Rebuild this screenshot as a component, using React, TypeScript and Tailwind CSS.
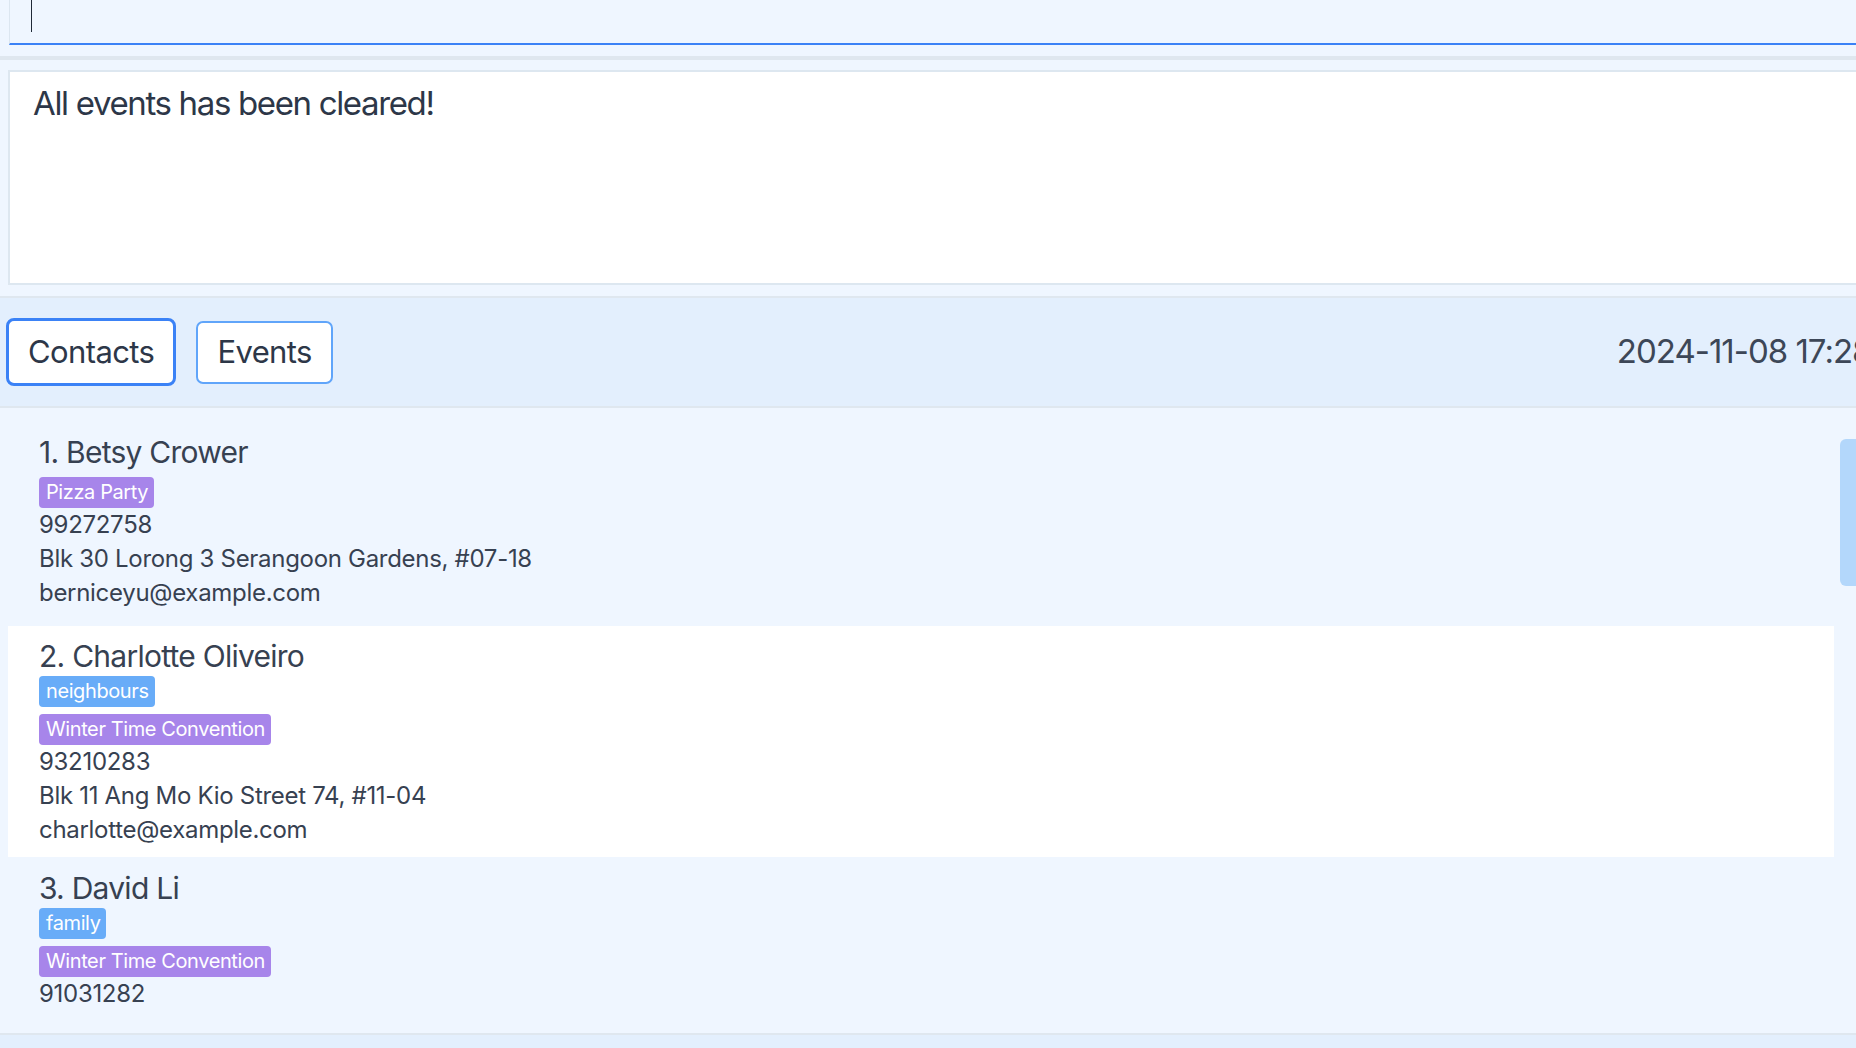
type Tag = { label: string; kind: 'tag' | 'event' };

type Contact = {
    name: string;
    tags: Tag[];
    lines: string[];
};

const contacts: Contact[] = [
    {
        name: 'Betsy Crower',
        tags: [{ label: 'Pizza Party', kind: 'event' }],
        lines: ['99272758', 'Blk 30 Lorong 3 Serangoon Gardens, #07-18', 'berniceyu@example.com'],
    },
    {
        name: 'Charlotte Oliveiro',
        tags: [
            { label: 'neighbours', kind: 'tag' },
            { label: 'Winter Time Convention', kind: 'event' },
        ],
        lines: ['93210283', 'Blk 11 Ang Mo Kio Street 74, #11-04', 'charlotte@example.com'],
    },
    {
        // only the phone line is in view, the rest is scrolled below the list
        name: 'David Li',
        tags: [
            { label: 'family', kind: 'tag' },
            { label: 'Winter Time Convention', kind: 'event' },
        ],
        lines: ['91031282'],
    },
];

function ContactCard({ contact, index }: { contact: Contact; index: number }) {
    const first = index === 0;
    return (
        <div
            className={
                (index % 2 === 1 ? 'bg-white ' : '') +
                (first ? 'pt-[12px] pb-[16px] ' : index === 2 ? 'pt-[13px] pb-[10px] ' : 'pt-[12px] pb-[10px] ') +
                'pl-[31px] text-[#374151]'
            }
        >
            <div className="text-[30px] leading-[36px] tracking-[-0.75px]">
                {index + 1}. {contact.name}
            </div>
            <div className={'flex flex-col items-start gap-[7px] ' + (first ? 'mt-[7px]' : 'mt-[2px]')}>
                {contact.tags.map((t) => (
                    <span
                        key={t.label}
                        className={
                            (t.kind === 'event' ? 'bg-[#a785ea] ' : 'bg-[#68acf8] ') +
                            'h-[31px] rounded-[4px] pl-[7px] pr-[6px] text-[20px] leading-[31px] tracking-[-0.4px] text-white'
                        }
                    >
                        {t.label}
                    </span>
                ))}
            </div>
            <div className="text-[24px] leading-[34px] tracking-[-0.3px]">
                {contact.lines.map((l) => (
                    <div key={l}>{l}</div>
                ))}
            </div>
        </div>
    );
}

function App() {
    return (
        <div className="w-screen h-screen overflow-hidden bg-[#eff6ff] font-[family-name:Inter,sans-serif] text-[#2d3748]">
            <div className="w-[1900px] flex flex-col">
                {/* Command box */}
                <div className="ml-[9px] h-[45px] border-l border-b-2 border-l-[#dce6f0] border-b-[#3b82f6] pl-[21px]">
                    <div className="w-px h-[32px] bg-[#1f2937]" />
                </div>
                <div className="h-[11px]" />
                <div className="h-[4px] bg-[#dfe7ef]" />

                {/* Result display */}
                <div className="pt-[10px] pb-[11px] pl-[8px]">
                    <div className="h-[215px] border-2 border-[#dde7f0] bg-white pl-[23px] pt-[11px]">
                        <div className="text-[33px] leading-[40px] tracking-[-1.35px]">All events has been cleared!</div>
                    </div>
                </div>

                {/* Tabs */}
                <div className="h-[2px] bg-[#dfe7ef]" />
                <div className="h-[108px] bg-[#e3effd] flex items-center pl-[6px]">
                    <button className="h-[68px] px-[19px] rounded-[8px] border-[3px] border-[#3b82f6] bg-white text-[31px] tracking-[-0.6px] text-[#2d3748]">
                        Contacts
                    </button>
                    <button className="ml-[20px] h-[63px] px-[19px] rounded-[7px] border-2 border-[#60a5fa] bg-white text-[31px] tracking-[-0.6px] text-[#2d3748]">
                        Events
                    </button>
                    <div className="ml-[1284px] whitespace-nowrap text-[33px] tracking-[-1px] text-[#3d4757]">2024-11-08 17:28</div>
                </div>
                <div className="h-[2px] bg-[#dfe7ef]" />

                {/* Contact list */}
                <div className="h-[625px] overflow-hidden flex">
                    <div className="ml-[8px] w-[1826px] pt-[14px]">
                        {contacts.map((c, i) => (
                            <ContactCard key={c.name} contact={c} index={i} />
                        ))}
                    </div>
                    <div className="ml-[6px] w-[18px] pt-[31px]">
                        <div className="h-[147px] rounded-l-[6px] bg-[#b3d7fb]" />
                    </div>
                </div>
                <div className="h-[2px] bg-[#dfe7ef]" />
                <div className="h-[40px] bg-[#e3effd]" />
            </div>
        </div>
    );
}

export default App;
